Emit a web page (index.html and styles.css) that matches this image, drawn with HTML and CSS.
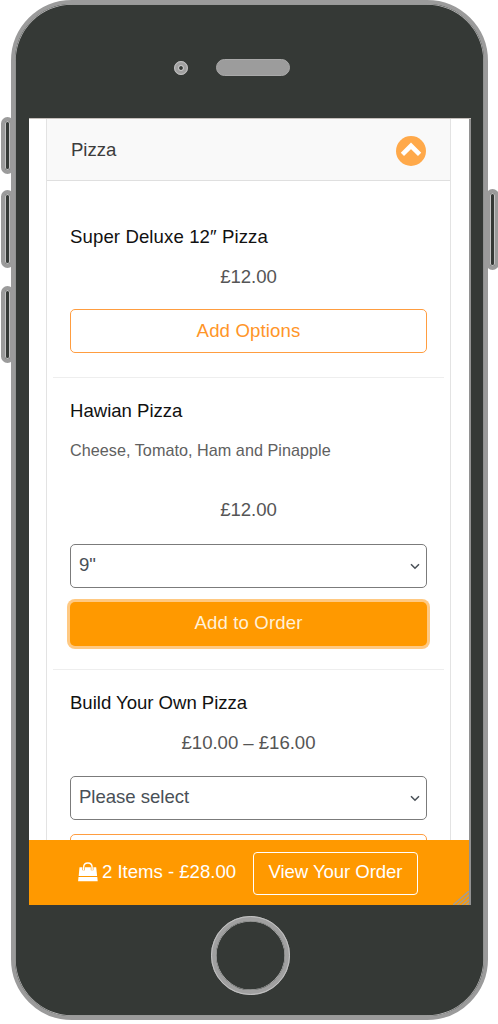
FILE: index.html
```html
<!DOCTYPE html>
<html lang="en">
<head>
<meta charset="utf-8">
<title>Pizza order</title>
<link rel="stylesheet" href="styles.css">
</head>
<body>
<div class="stage">
  <span class="key key-mute"></span>
  <span class="key key-up"></span>
  <span class="key key-down"></span>
  <span class="key key-power"></span>
  <div class="phone">
    <div class="top">
      <svg class="camera" viewBox="0 0 14 14"><circle cx="7" cy="7" r="4.4" fill="none" stroke="#a0a0a0" stroke-width="5"/><circle cx="7" cy="7" r="6.4" fill="none" stroke="#c4c4c4"/><circle cx="7" cy="7" r="2.6" fill="none" stroke="#c4c4c4"/></svg>
      <span class="speaker"></span>
    </div>
    <div class="screen">
      <main class="menu">
        <header class="menu-head">
          <span class="head-title">Pizza</span>
          <svg class="toggle" viewBox="0 0 30 30"><circle cx="15" cy="15" r="15" fill="#ffa94a"/><path d="M6.4 18.4 15 9.8l8.6 8.6" fill="none" stroke="#fff" stroke-width="4.6" stroke-linejoin="miter"/></svg>
        </header>
        <section class="product first">
          <h2 class="name wide">Super Deluxe 12″ Pizza</h2>
          <p class="price">£12.00</p>
          <button class="btn outline">Add Options</button>
        </section>
        <section class="product second">
          <h2 class="name">Hawian Pizza</h2>
          <p class="desc">Cheese, Tomato, Ham and Pinapple</p>
          <p class="price">£12.00</p>
          <div class="select"><span>9"</span><svg class="caret" viewBox="0 0 10 7"><path d="M1 1.2 5 5.3l4-4.1" fill="none" stroke="#495057" stroke-width="1.5"/></svg></div>
          <button class="btn solid">Add to Order</button>
        </section>
        <section class="product third">
          <h2 class="name tight">Build Your Own Pizza</h2>
          <p class="price">£10.00 – £16.00</p>
          <div class="select"><span>Please select</span><svg class="caret" viewBox="0 0 10 7"><path d="M1 1.2 5 5.3l4-4.1" fill="none" stroke="#495057" stroke-width="1.5"/></svg></div>
          <button class="btn outline"></button>
        </section>
      </main>
      <footer class="cart">
        <svg class="bag" viewBox="0 0 20 20"><path d="M1.5 5.2h16.7l.9 8.7H.7z" fill="#fff"/><path d="M5.7 8.2V5.2C5.7 2.6 7.4 1 9.9 1s4.2 1.6 4.2 4.2v3" fill="none" stroke="#ff9900" stroke-width="2.6"/><path d="M5.7 8V5.2C5.7 2.6 7.4 1 9.9 1s4.2 1.6 4.2 4.2V8" fill="none" stroke="#fff" stroke-width="1.4"/><path d="M.5 15h18.8l.4 4.2H.1z" fill="#fff"/></svg>
        <span class="total">2 Items - £28.00</span>
        <button class="view">View Your Order</button>
        <svg class="grip" viewBox="0 0 16 14"><path d="M0 14 16 0M4.5 14 16 4M9 14l7-6M13 14l3-2.5" stroke="#a59c90" stroke-width="1.5" fill="none"/></svg>
      </footer>
    </div>
    <div class="bottom"><span class="home"></span></div>
  </div>
</div>
</body>
</html>
```
FILE: styles.css
```css
* { box-sizing: border-box; }
body { margin: 0; background: #fff; font-family: "Liberation Sans", Arial, sans-serif; font-size: 18.6px; color: #444; }
h2, p { margin: 0; }
button { font: inherit; letter-spacing: inherit; padding: 0; }
.stage { position: relative; width: 498px; height: 1024px; overflow: hidden; padding-left: 11px; }

/* device shell */
.phone { position: relative; width: 477px; height: 1020px; border: 4px solid #9b9b9b; border-radius: 61px; background: #353936; display: flex; flex-direction: column; box-shadow: inset 0 0 0 .7px #b9b9b9; }
.key { position: absolute; border: 4px solid #9b9b9b; border-radius: 7px; background: #353936; box-shadow: inset 0 0 0 1px #c4c4c4; }
.key-mute { left: 1px; top: 117px; width: 13px; height: 57px; }
.key-up { left: 1px; top: 190px; width: 13px; height: 78px; }
.key-down { left: 1px; top: 286px; width: 13px; height: 77px; }
.key-power { left: 486px; top: 189px; width: 13px; height: 81px; }
.top { height: 115px; flex: none; display: flex; align-items: flex-start; padding: 55px 0 0 159px; }
.camera { width: 14px; height: 14px; margin-top: 2px; }
.speaker { width: 74px; height: 17px; margin-left: 28px; border-radius: 8.5px; background: #9c9c9c; border: 1px solid #a9a9a9; }

/* app viewport */
.screen { width: 442px; height: 786px; margin-left: 14px; flex: none; background: #fff; display: flex; flex-direction: column; border-right: 2px solid #929292; box-shadow: 0 -1px #c5bfbb; }
.menu { height: 721px; flex: none; overflow: hidden; margin: 0 18px 0 17px; border: solid #e3e3e3; border-width: 0 1px; }
.menu-head { height: 62px; padding: 0 24px; background: #f9f9f9; border-bottom: 1px solid #dfdfdf; display: flex; align-items: center; justify-content: space-between; color: #3c3c3c; letter-spacing: -.05px; }
.toggle { width: 30px; height: 30px; margin-top: 2px; }
.product { margin: 0 6px; padding: 0 17px; display: flex; flex-direction: column; border-bottom: 1px solid #eee; }
.first { height: 196.5px; padding-top: 44px; }
.second { height: 292px; padding-top: 21.5px; }
.third { padding-top: 21.5px; border: 0; }
.name { font-size: 18.6px; line-height: 24px; font-weight: 400; letter-spacing: -.02px; color: #111; }
.wide { letter-spacing: .1px; }
.tight { letter-spacing: -.03px; }
.price { line-height: 24px; margin-top: 15.5px; text-align: center; letter-spacing: -.03px; color: #555; }
.desc { font-size: 16.2px; line-height: 20px; margin-top: 17px; letter-spacing: .03px; color: #606060; }
.desc + .price { margin-top: 38px; }
.btn { height: 44px; flex: none; border-radius: 5px; letter-spacing: .13px; line-height: 40px; }
.outline { margin-top: 20.5px; border: 1px solid #ff9d40; background: #fff; color: #ff9528; }
.select { height: 44px; flex: none; margin-top: 21.5px; border: 1px solid #7b7b7b; border-radius: 5px; padding: 0 6px 2px 8px; display: flex; align-items: center; justify-content: space-between; color: #495057; letter-spacing: -.04px; }
.caret { width: 10px; height: 7px; margin-top: 3px; }
.solid { margin-top: 14px; border: 0; background: #f90; color: #fff0d8; line-height: 40px; padding-bottom: 2px; box-shadow: 0 0 0 3px #ffc982; }
.third .outline { margin-top: 14px; }

.cart { position: relative; height: 65px; width: 440px; background: #f90; color: #fff; display: flex; padding: 11.5px 0 0 49px; }
.bag { width: 20px; height: 20px; margin-top: 10px; }
.total { margin: 9px 0 0 4px; width: 151px; line-height: 22px; letter-spacing: -.02px; white-space: nowrap; }
.view { width: 165px; height: 43.5px; border: 1.5px solid #fff; border-radius: 4px; background: transparent; color: #fff; letter-spacing: -.07px; line-height: 38px; padding-bottom: 2px; }
.grip { position: absolute; right: 0; bottom: 0; width: 16px; height: 14px; }

.bottom { flex: 1; display: flex; justify-content: center; padding: 11px 0 0 1px; }
.home { width: 79px; height: 79px; border: 5px solid #a0a0a0; border-radius: 50%; box-shadow: inset 0 0 0 .5px #ccc; outline: 1px solid #c4c4c4; outline-offset: -1px; }
```
